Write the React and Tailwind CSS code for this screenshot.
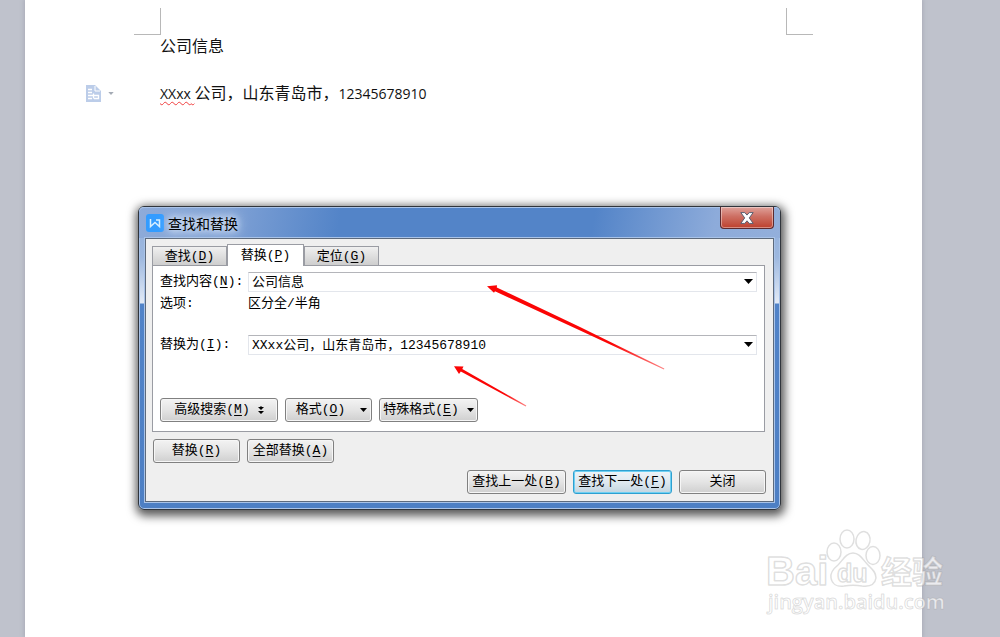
const tabs = [
  { label: "查找", hotkey: "D" },
  { label: "替换", hotkey: "P", active: true },
  { label: "定位", hotkey: "G" },
];

function Hotkey({ children }) {
  return (
    <>
      (<span className="underline underline-offset-2">{children}</span>)
    </>
  );
}

function Caret({ size = "h-[5px] w-[9px]" }) {
  return (
    <svg className={`shrink-0 ${size}`} viewBox="0 0 9 5" fill="currentColor">
      <path d="M0 0h9L4.5 5z" />
    </svg>
  );
}

function DialogButton({ children, primary, className = "" }) {
  const look = primary
    ? "border-[#2fa0d0] from-[#eef4f8] via-[#dfe9f0] to-[#c3d5e0] shadow-[inset_0_0_0_1px_#6fd0f3]"
    : "border-[#808080] from-[#f3f3f3] via-[#e4e4e4] to-[#cfcfcf] shadow-[inset_0_0_0_1px_#f6f6f6]";
  return (
    <button
      type="button"
      className={`flex h-6 items-center justify-center whitespace-nowrap rounded-[3px] border bg-linear-to-b ${look} ${className}`}
    >
      {children}
    </button>
  );
}

function ComboBox({ id, value }) {
  return (
    <div className="flex h-5 items-center border border-[#e3e6ec] border-t-[#b4b5ba] bg-white">
      <input id={id} defaultValue={value} className="h-full min-w-0 flex-1 bg-transparent px-[3px] pb-1 leading-none outline-none" />
      <button type="button" aria-label="展开" className="flex h-full w-4 items-center justify-center pb-px">
        <Caret />
      </button>
    </div>
  );
}

function FindReplaceDialog() {
  return (
    <section className="absolute left-[138px] top-[206px] w-[643px] rounded-[6px] border border-[#30353c] bg-[linear-gradient(180deg,#8fadd9_0px,#9db8df_50px,#e2eaf6_96px,#5183c8_97px,#4d7fc4_100%)] shadow-[inset_0_0_0_1px_#a9c3e8,1px_3px_10px_3px_rgba(0,0,0,0.65)]">
      <header className="flex h-[31px] items-start justify-between rounded-t-[5px] bg-[linear-gradient(100deg,#8eabd9_0px,#7fa1d5_90px,#5384c8_200px,#5384c8_450px,#8dabda_570px,#93afdb_100%)] pl-[7px] pr-[6px] shadow-[inset_0_1px_0_#a9c3e8]">
        <div className="flex h-[31px] items-center gap-1">
          <svg className="h-[18px] w-[18px]" viewBox="0 0 18 18">
            <rect width="18" height="18" rx="3" fill="#339cff" />
            <path d="M4.500 5v7.500L9 8.500l4.500 4V6H10" fill="none" stroke="#d8efff" strokeWidth="1.500" />
          </svg>
          <h2 className="font-['Noto_Sans_CJK_SC',sans-serif] text-sm text-black [text-shadow:0_0_6px_#dce8f8,0_0_10px_#dce8f8,0_0_14px_#dce8f8]">
            查找和替换
          </h2>
        </div>
        <button
          type="button"
          aria-label="关闭窗口"
          className="flex h-[22px] w-[54px] items-center justify-center rounded-b-[4px] border border-t-0 border-[#5c2a2f] bg-linear-to-b from-[#dfa29b] from-0% via-[#cd6f63] via-45% to-[#bd3f2c] shadow-[inset_0_0_0_1px_rgba(255,255,255,0.4)]"
        >
          <svg className="h-3 w-[14px]" viewBox="0 0 14 12">
            <path
              d="M.8.600h4L7 3.100 9.200.600h4L9.300 5.900l3.900 5.500h-4L7 8.800l-2.200 2.600h-4l3.900-5.500z"
              fill="#fff"
              stroke="#5b5f70"
            />
          </svg>
        </button>
      </header>

      <form className="mx-[6px] mb-[7px] border border-[#5d6a7c] bg-[#efefef] pb-[7px] pl-[6px] pr-2 pt-[5px] font-['Liberation_Mono','Noto_Sans_CJK_SC',monospace] text-[13px] leading-[20px] text-black shadow-[0_0_0_1px_#a9c3e8]">
        <div role="tablist" className="flex items-end">
          {tabs.map((tab) => (
            <button
              key={tab.hotkey}
              type="button"
              role="tab"
              aria-selected={!!tab.active}
              className={
                tab.active
                  ? "relative z-10 -mb-px h-[22px] w-[77px] border border-b-0 border-[#9a9ca3] bg-white"
                  : "h-[19px] w-[75px] border border-b-0 border-[#9a9ca3] bg-linear-to-b from-[#f0f0f0] to-[#cecece]"
              }
            >
              {tab.label}
              <Hotkey>{tab.hotkey}</Hotkey>
            </button>
          ))}
        </div>

        <div className="border border-[#9a9ca3] bg-white px-[7px] pb-[9px] pt-[6px]">
          <div className="grid grid-cols-[88px_1fr] items-center gap-y-[2px]">
            <label htmlFor="find" className="whitespace-nowrap">
              查找内容<Hotkey>N</Hotkey>:
            </label>
            <ComboBox id="find" value="公司信息" />
            <span>选项:</span>
            <span>区分全/半角</span>
          </div>
          <div className="mt-[21px] grid grid-cols-[88px_1fr] items-center">
            <label htmlFor="replace">
              替换为<Hotkey>I</Hotkey>:
            </label>
            <ComboBox id="replace" value="XXxx公司，山东青岛市，12345678910" />
          </div>
          <div className="mt-[43px] flex gap-[7px]">
            <DialogButton className="w-[118px] gap-2">
              <span>
                高级搜索<Hotkey>M</Hotkey>
              </span>
              <svg className="h-2 w-[6px]" viewBox="0 0 6 8">
                <path d="M0 1h6L3 4zM0 5h6L3 8zM2.500 0h1v2h-1z" />
              </svg>
            </DialogButton>
            <DialogButton className="w-[87px] gap-[15px] pl-[6px]">
              <span>
                格式<Hotkey>O</Hotkey>
              </span>
              <Caret size="h-1 w-[7px]" />
            </DialogButton>
            <DialogButton className="w-[99px] gap-2">
              <span>
                特殊格式<Hotkey>E</Hotkey>
              </span>
              <Caret size="h-1 w-[7px]" />
            </DialogButton>
          </div>
        </div>

        <div className="mt-[7px] flex gap-[7px] pl-px">
          <DialogButton className="w-[87px]">
            替换<Hotkey>R</Hotkey>
          </DialogButton>
          <DialogButton className="w-[87px]">
            全部替换<Hotkey>A</Hotkey>
          </DialogButton>
        </div>
        <div className="-mr-px mt-[7px] flex justify-end gap-[7px]">
          <DialogButton className="w-[99px]">
            查找上一处<Hotkey>B</Hotkey>
          </DialogButton>
          <DialogButton primary className="w-[99px]">
            查找下一处<Hotkey>F</Hotkey>
          </DialogButton>
          <DialogButton className="w-[87px]">关闭</DialogButton>
        </div>
      </form>
    </section>
  );
}

function Arrows() {
  return (
    <svg className="pointer-events-none absolute left-[450px] top-[280px] h-[130px] w-[220px]" viewBox="450 280 220 130">
      <defs>
        <linearGradient id="fade">
          <stop offset="0.7" stopColor="#fb0505" />
          <stop offset="1" stopColor="#fb0505" stopOpacity="0.5" />
        </linearGradient>
      </defs>
      <path fill="url(#fade)" d="M487 286.300L497 285.200 496.800 287.500 580 327 664.300 368.500 664 369.400 579 330 495 291.300 494 292.800z" />
      <path fill="url(#fade)" d="M454 366.200L463.500 366.500 462.300 369 526.300 405.500 525.800 406.500 460.800 371.500 459 374z" />
    </svg>
  );
}

function Watermark() {
  return (
    <svg
      className="pointer-events-none absolute left-[760px] top-[524px] h-[96px] w-[200px]"
      viewBox="760 524 200 96"
      fill="#ffffff"
      fillOpacity="0.7"
      stroke="#9a9a9a"
      strokeOpacity="0.32"
      strokeWidth="1.5"
      strokeLinejoin="round"
    >
      <text x="766" y="585" fontFamily="Liberation Sans, sans-serif" fontSize="40" fontWeight="700">
        Bai
      </text>
      <ellipse cx="834" cy="552" rx="7" ry="9" />
      <ellipse cx="847" cy="539" rx="7" ry="9" />
      <ellipse cx="863" cy="540.500" rx="7" ry="9" transform="rotate(12 863 540.5)" />
      <ellipse cx="873" cy="555.500" rx="7" ry="9" />
      <path d="M853 553C846 553 843 560 838 565 833 569 830 573 831 578 832 584 837 587 844 586 850 585 856 585 862 586 870 587 875 584 876 578 876 572 872 569 868 565 863 560 860 553 853 553z" />
      <text x="837" y="582" fontFamily="Liberation Sans, sans-serif" fontSize="25" fontWeight="700">
        du
      </text>
      <text x="881" y="583" fontFamily="Noto Sans CJK SC, sans-serif" fontSize="31" fontWeight="700">
        经验
      </text>
      <text x="768" y="609" fontFamily="Open Sans, sans-serif" fontSize="20" fontWeight="600" strokeWidth="1">
        jingyan.baidu.com
      </text>
    </svg>
  );
}

export default function App() {
  return (
    <main className="relative flex min-h-screen overflow-hidden bg-[#bfc2cc] pl-[25px] pr-[78px]">
      <article className="flex-1 bg-white font-['Noto_Sans_CJK_SC',sans-serif] text-base leading-[20px] text-[#111] shadow-[0_0_4px_1px_#a9acb8]">
        {/* page margin marks */}
        <div className="flex justify-between px-[109px] pt-2">
          <span className="h-[27px] w-[27px] border-b border-r border-[#b8b8b8]" />
          <span className="h-[27px] w-[27px] border-b border-l border-[#b8b8b8]" />
        </div>
        <p className="pl-[135px]">公司信息</p>
        <div className="mt-[27px] flex items-center pl-[61px]">
          <button type="button" aria-label="段落布局" className="flex w-[74px] items-center gap-[7px] text-[#a5abb5]">
            <svg className="h-[17px] w-[15px]" viewBox="0 0 15 17">
              <path d="M0 0h9l6 6v11H0z" fill="#bccde9" />
              <path d="M9 1v5h5" fill="none" stroke="#fff" />
              <path d="M2 4.500h4M2 7.500h4M2 10.500h10.500v3H8M2 13.500h4M7.500 8.500v5" fill="none" stroke="#fff" strokeWidth="1.300" />
            </svg>
            <Caret size="h-[3px] w-[6px]" />
          </button>
          <p className="whitespace-nowrap">
            <span className="font-['Open_Sans',sans-serif] text-sm underline decoration-[#f04040] decoration-wavy decoration-1 underline-offset-2">
              XXxx{" "}
            </span>
            公司，山东青岛市，
            <span className="font-['Open_Sans',sans-serif] text-sm">12345678910</span>
          </p>
        </div>
      </article>

      <FindReplaceDialog />
      <Arrows />
      <Watermark />
    </main>
  );
}
